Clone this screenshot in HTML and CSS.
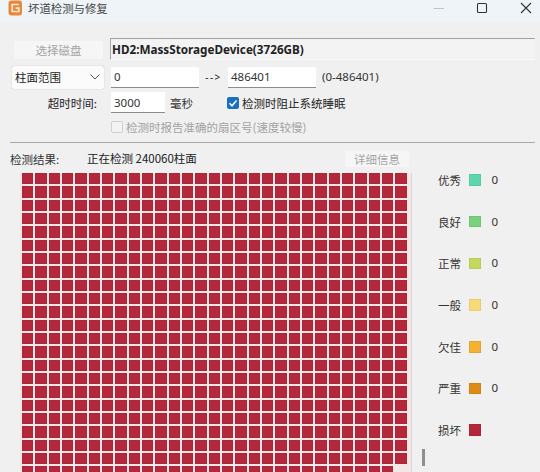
FILE: index.html
```html
<!DOCTYPE html>
<html lang="zh-CN">
<head>
<meta charset="utf-8">
<title>坏道检测与修复</title>
<link rel="stylesheet" href="styles.css">
</head>
<body>
<div class="window">
  <header class="titlebar">
    <svg class="logo" width="15" height="16" viewBox="0 0 15 16"><rect x="0.5" y="0.5" width="13.5" height="15" rx="3" fill="#e8883a"/><path d="M10.8 4.5H4.2v7h6.6V8.2H7.6" fill="none" stroke="#fbe6cf" stroke-width="1.7"/></svg>
    <span class="title">坏道检测与修复</span>
    <div class="controls">
      <svg width="12" height="12" viewBox="0 0 12 12"><path d="M1.5 6.5h11" stroke="#c0c4c8" stroke-width="1"/></svg>
      <svg width="12" height="12" viewBox="0 0 12 12"><rect x="1.5" y="1.5" width="9" height="9" rx="1" fill="none" stroke="#333" stroke-width="1.1"/></svg>
      <svg width="12" height="12" viewBox="0 0 12 12"><path d="M1 1l10 10M11 1L1 11" stroke="#333" stroke-width="1.1"/></svg>
    </div>
  </header>
  <main class="content">
    <div class="row row-disk">
      <button class="btn btn-disk" disabled>选择磁盘</button>
      <div class="disk-name">HD2:MassStorageDevice(3726GB)</div>
    </div>
    <div class="row row-range">
      <div class="select"><span>柱面范围</span><svg width="10" height="6" viewBox="0 0 10 6"><path d="M0.5 0.5L5 5l4.5-4.5" fill="none" stroke="#555" stroke-width="1"/></svg></div>
      <div class="input input-wide">0</div>
      <span class="arrow">--&gt;</span>
      <div class="input input-wide">486401</div>
      <span class="hint">(0-486401)</span>
    </div>
    <div class="row row-timeout">
      <label class="field-label">超时时间:</label>
      <div class="input input-short">3000</div>
      <span class="unit">毫秒</span>
      <span class="check checked"><svg width="12" height="12" viewBox="0 0 12 12"><path d="M2.5 6.2l2.5 2.6 4.5-5.4" fill="none" stroke="#fff" stroke-width="1.5"/></svg></span>
      <span class="check-text">检测时阻止系统睡眠</span>
    </div>
    <div class="row row-report">
      <span class="check"></span>
      <span class="check-text muted">检测时报告准确的扇区号(速度较慢)</span>
    </div>
    <hr class="sep">
    <div class="row row-status">
      <span class="status-label">检测结果:</span>
      <span class="status-value">正在检测 240060柱面</span>
      <button class="btn btn-detail" disabled>详细信息</button>
    </div>
    <div class="results">
      <div class="map" id="map"></div>
      <div class="scroll"><div class="thumb"></div></div>
      <ul class="legend">
        <li><span class="name">优秀</span><i class="sw s1"></i><span class="val">0</span></li>
        <li><span class="name">良好</span><i class="sw s2"></i><span class="val">0</span></li>
        <li><span class="name">正常</span><i class="sw s3"></i><span class="val">0</span></li>
        <li><span class="name">一般</span><i class="sw s4"></i><span class="val">0</span></li>
        <li><span class="name">欠佳</span><i class="sw s5"></i><span class="val">0</span></li>
        <li><span class="name">严重</span><i class="sw s6"></i><span class="val">0</span></li>
        <li><span class="name">损坏</span><i class="sw s7"></i></li>
      </ul>
    </div>
  </main>
</div>
<script src="script.js"></script>
</body>
</html>
```

FILE: styles.css
```css
* { box-sizing: border-box; }
html, body { margin: 0; height: 100%; }
body {
  background: #f0f0f0;
  color: #222;
  font: 11.5px/16px "Noto Sans CJK SC", "Noto Sans", sans-serif;
  overflow: hidden;
}
.window { width: 540px; height: 472px; overflow: hidden; }
.titlebar {
  height: 22px;
  background: #eff4f8;
  display: flex;
  align-items: center;
  padding: 0 8px 0 8px;
  gap: 5px;
  color: #444;
}
.logo { flex: none; margin-top: -6px; }
.title { margin-top: -6px; font-size: 11.4px; }
.controls { margin-left: auto; display: flex; gap: 32px; margin-top: -6px; }
.content { padding: 16px 5px 0 10px; }
.row { display: flex; align-items: center; }
.btn {
  border: 0;
  background: #f6f6f6;
  color: #a4a4a4;
  font: inherit;
  padding: 0;
  border-radius: 2px;
}
.row-disk { height: 22px; padding-left: 4px; }
.btn-disk { width: 89px; height: 18px; margin-top: 1px; }
.disk-name {
  margin-left: 7px;
  flex: 1;
  height: 22px;
  background: #f3f3f3;
  border-top: 1px solid #a0a0a0;
  border-left: 1px solid #a8a8a8;
  border-bottom: 1px solid #fafafa;
  padding-left: 1px;
  font: bold 11.7px/20px "Noto Sans", sans-serif;
  color: #222;
}
.row-range { height: 24px; margin-top: 5px; padding-left: 2px; }
.select {
  width: 92px;
  height: 23px;
  background: #fbfbfb;
  border-radius: 2px;
  box-shadow: 0 0 1px #999;
  display: flex;
  align-items: center;
  justify-content: space-between;
  padding: 0 4px 0 3px;
}
.input {
  background: #fff;
  border-bottom: 1px solid #8c8c8c;
  display: flex;
  align-items: center;
  font: 11.5px "Noto Sans", sans-serif;
  padding-left: 3px;
  color: #333;
}
.input-wide { width: 88px; height: 21px; }
.row-range .select + .input { margin-left: 7px; }
.arrow { width: 29px; text-align: center; font: 10px "Noto Sans", sans-serif; letter-spacing: 1.5px; }
.hint { margin-left: 6px; font-family: "Noto Sans", sans-serif; font-size: 11.5px; color: #333; }
.row-timeout { height: 21px; margin-top: 3px; }
.field-label { width: 87px; text-align: right; margin-right: 14px; }
.input-short { width: 54px; height: 21px; }
.unit { margin-left: 5px; width: 57px; color: #333; }
.check {
  width: 12px;
  height: 12px;
  border: 1px solid #d0d0d0;
  border-radius: 2px;
  background: #f3f3f3;
  flex: none;
}
.check.checked { background: #1a6fc0; border: 0; display: flex; }
.check-text { margin-left: 3px; }
.muted { color: #a2a2a2; }
.row-report { height: 16px; margin-top: 6px; padding-left: 101px; }
.sep { border: 0; border-top: 1px solid #a8a8a8; margin: 7px 0 0; height: 0; }
.row-status { height: 17px; margin-top: 7px; }
.status-label { width: 77px; color: #333; }
.status-value { flex: none; width: 258px; padding-bottom: 2px; color: #222; }
.btn-detail { width: 64px; height: 16px; }
.results { display: flex; margin-top: 6px; padding-left: 10px; }
.map {
  width: 392px;
  height: 300px;
  background: #f3e6e6;
  padding: 0 0 0 2px;
  border-right: 1px solid #d8d8d8;
  display: grid;
  grid-template-columns: repeat(29, 11.33px);
  grid-auto-rows: 11.33px;
  gap: 2px;
  overflow: hidden;
  align-content: start;
}
.cell { background: #b5283c; box-shadow: inset 0 0 0 1px #a8283a; }
.cell.blank { background: #f3e6e6; box-shadow: none; }
.scroll { width: 16px; position: relative; flex: none; padding: 276px 0 0 10px; }
.thumb { width: 2.5px; height: 17px; background: #8f8f8f; }
.legend { list-style: none; margin: -1px 0 0; padding: 0 0 0 10px; }
.legend li { display: flex; align-items: center; height: 16px; margin-bottom: 25.7px; color: #333; }
.name { width: 31px; }
.sw { width: 11.5px; height: 11.5px; flex: none; border: 1px solid rgba(0,0,0,.06); }
.val { margin-left: 11px; font-family: "Noto Sans", sans-serif; }
.s1 { background: #5dd6b0; }
.s2 { background: #78d27c; }
.s3 { background: #c6d75e; }
.s4 { background: #f6da78; }
.s5 { background: #f2b232; }
.s6 { background: #dd8a16; }
.s7 { background: #b5283c; }
```

FILE: script.js
```js
var map = document.getElementById('map');
var total = 29 * 23;
for (var i = 0; i < total; i++) {
  var cell = document.createElement('div');
  cell.className = i === total - 1 ? 'cell blank' : 'cell';
  map.appendChild(cell);
}
```
